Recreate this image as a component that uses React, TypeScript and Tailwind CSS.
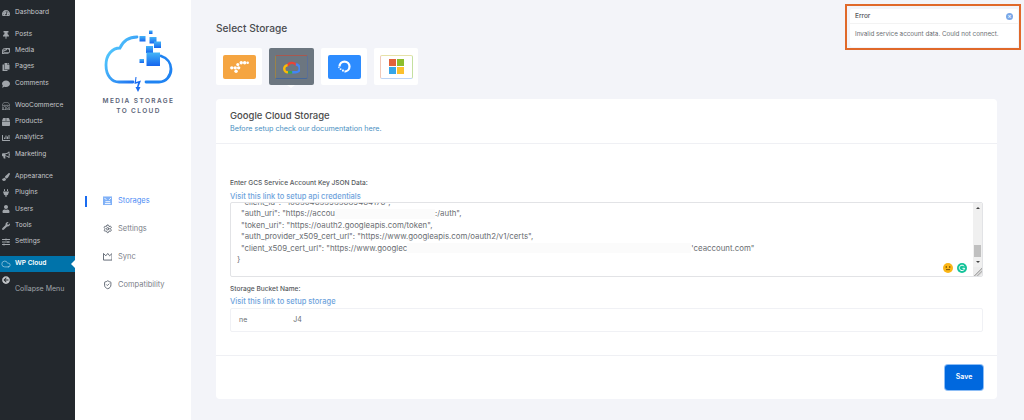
import {
  FaBox,
  FaBullhorn,
  FaChartBar,
  FaComment,
  FaCopy,
  FaImages,
  FaPaintBrush,
  FaPlug,
  FaSlidersH,
  FaTachometerAlt,
  FaThumbtack,
  FaUser,
  FaWrench,
  FaArrowCircleLeft,
} from "react-icons/fa";
import { BsShop } from "react-icons/bs";
import { Cloud, Settings, ShieldCheck } from "lucide-react";

const wpGroups = [
  [{ label: "Dashboard", icon: FaTachometerAlt }],
  [
    { label: "Posts", icon: FaThumbtack },
    { label: "Media", icon: FaImages },
    { label: "Pages", icon: FaCopy },
    { label: "Comments", icon: FaComment },
  ],
  [
    { label: "WooCommerce", icon: BsShop },
    { label: "Products", icon: FaBox },
    { label: "Analytics", icon: FaChartBar },
    { label: "Marketing", icon: FaBullhorn },
  ],
  [
    { label: "Appearance", icon: FaPaintBrush },
    { label: "Plugins", icon: FaPlug },
    { label: "Users", icon: FaUser },
    { label: "Tools", icon: FaWrench },
    { label: "Settings", icon: FaSlidersH },
  ],
];

function WpSidebar() {
  return (
    <aside className="flex w-[75px] shrink-0 flex-col bg-[#23282d] pt-[4.5px] text-[6.6px] text-[#c3c6ca]">
      {wpGroups.map((group, i) => (
        <div key={i} className="mb-[5.5px]">
          {group.map((item) => (
            <div key={item.label} className="flex h-[16.4px] items-center gap-[5px] pl-[2px]">
              <item.icon className="h-[8px] w-[8px] shrink-0 text-[#a0a5aa]" />
              <span>{item.label}</span>
            </div>
          ))}
        </div>
      ))}
      <div className="relative flex h-[16.5px] items-center gap-[4px] bg-[#0073aa] pl-[1px] font-semibold text-white">
        <Cloud className="h-[10px] w-[10px] shrink-0 text-[#b9dcec]" strokeWidth={1.5} />
        <span>WP Cloud</span>
        <span className="absolute right-0 top-[4px] border-y-[4px] border-r-[4px] border-y-transparent border-r-white" />
      </div>
      <div className="flex pl-[2px] pt-[3.5px]">
        <FaArrowCircleLeft className="h-[8px] w-[8px] shrink-0 text-[#c4c7ca]" />
      </div>
      <div className="pl-[15px] text-[7px] text-[#a0a5aa]">Collapse Menu</div>
    </aside>
  );
}

function Logo() {
  return (
    <svg viewBox="100 22 80 70" className="h-[70px] w-[80px]">
      <defs>
        <linearGradient id="cloud" x1="0" y1="0" x2="1" y2="1">
          <stop offset="0" stopColor="#5fdcff" />
          <stop offset="1" stopColor="#1a6cf0" />
        </linearGradient>
        <linearGradient id="bits" x1="0" y1="0" x2="0" y2="1">
          <stop offset="0" stopColor="#45b5f7" />
          <stop offset="1" stopColor="#1565ee" />
        </linearGradient>
      </defs>
      <path
        d="M138 34C129 34 124 38 121 45C113 45 107 52 107 62C107 73 113 79 120 79H134"
        fill="none"
        stroke="url(#cloud)"
        strokeWidth="2.8"
        strokeLinecap="round"
      />
      <path
        d="M147 79H160C167 79 172 73 172 66C172 60 168 55 162 53"
        fill="none"
        stroke="#1f83f2"
        strokeWidth="2.8"
        strokeLinecap="round"
      />
      <path d="M138 70L135.500 74H137.500L137 79L142 77.500L139.500 84H141.500L139 89L136.500 84H138L139 80L135.500 81L136.500 74H135.500Z" fill="#1a6cf0" />
      <g fill="url(#bits)">
        <rect x="150" y="27.500" width="3.500" height="3.500" />
        <rect x="140.500" y="33" width="6" height="5.500" />
        <rect x="150.500" y="34" width="7" height="6.500" />
        <rect x="155" y="38.500" width="7" height="6.500" />
        <rect x="147" y="43" width="7" height="7" />
        <rect x="147.500" y="49.500" width="13.500" height="13.500" />
        <rect x="140.500" y="56" width="4.500" height="4" />
      </g>
    </svg>
  );
}

function StoragesIcon({ className }: { className?: string }) {
  return (
    <svg viewBox="0 0 10 9" className={className}>
      <rect x="0" y="0" width="10" height="9" fill="#7fb0f7" />
      <path d="M1.500 1.500L3.500 3.500M8.500 1.500L6.500 3.500M2 7.500H8M2.500 5.500H7.500" stroke="#fff" strokeWidth="1" fill="none" />
    </svg>
  );
}

function SyncIcon({ className }: { className?: string }) {
  return (
    <svg viewBox="0 0 10 9" className={className} fill="none" stroke="#5f6672" strokeWidth="1">
      <path d="M.5 1V8H9.500V1L7 3.500L5 1L3 3.500Z" />
    </svg>
  );
}

const pluginNav = [
  { label: "Storages", icon: StoragesIcon, active: true },
  { label: "Settings", icon: Settings },
  { label: "Sync", icon: SyncIcon },
  { label: "Compatibility", icon: ShieldCheck },
];

function PluginSidebar() {
  return (
    <aside className="flex w-[116px] shrink-0 flex-col bg-white pt-[25px]">
      <div className="flex justify-center pl-[11px]">
        <Logo />
      </div>
      <div className="mt-[1px] pl-[11px] text-center text-[6.5px] font-semibold leading-[10px] tracking-[1.4px] text-[#5b6478]">
        <div>MEDIA STORAGE</div>
        <div>TO CLOUD</div>
      </div>
      <nav className="mt-[71px] flex flex-col">
        {pluginNav.map((item) => (
          <div key={item.label} className="flex h-[28px] items-center pl-[10px] text-[7.5px]">
            <span className={`mr-[16px] h-[11px] w-[1.5px] ${item.active ? "bg-[#1a6cf0]" : "bg-transparent"}`} />
            <item.icon
              className={`mr-[6px] h-[9.500px] w-[9.500px] ${item.active ? "text-[#3b82f6]" : "text-[#5f6672]"}`}
              strokeWidth={2.4}
            />
            <span className={item.active ? "text-[#4b8bf5]" : "text-[#7b8088]"}>{item.label}</span>
          </div>
        ))}
      </nav>
    </aside>
  );
}

function StorageTiles() {
  return (
    <div className="mt-[10px] flex gap-[7px]">
      <div className="flex h-[37px] w-[46px] items-center justify-center rounded-[2px] bg-white">
        <div className="flex h-[24px] w-[33px] items-center justify-center rounded-[2px] bg-[#f5a541]">
          <svg viewBox="0 0 22 14" className="h-[12px] w-[19px]" fill="#fff">
            <circle cx="2" cy="8" r="2" />
            <circle cx="6" cy="8" r="2" />
            <circle cx="10" cy="8" r="2" />
            <circle cx="7" cy="12" r="2" />
            <circle cx="9" cy="4" r="1.800" />
            <circle cx="13" cy="2" r="2" />
            <circle cx="17" cy="2" r="2" />
            <circle cx="20.500" cy="2" r="1.500" />
          </svg>
        </div>
      </div>
      <div className="relative flex h-[37px] w-[45px] items-center justify-center rounded-[2px] bg-[#6c7680]">
        <div className="flex h-[24px] w-[33px] items-center justify-center rounded-[2px] border border-t-[#a8584f] border-r-[#5b6f97] border-b-[#44679b] border-l-[#9b8348]">
          <svg viewBox="0 0 24 19" className="h-[14px] w-[17px]" fill="none" strokeWidth="3.400">
            <path d="M6 8A7.500 7.500 0 0 1 19 7" stroke="#ea4335" />
            <path d="M18 6A5.500 5.500 0 0 1 18 17H12" stroke="#4285f4" />
            <path d="M13 17H6" stroke="#34a853" />
            <path d="M7 17A5 5 0 0 1 6.500 7" stroke="#fbbc05" />
          </svg>
        </div>
        <span className="absolute left-[18px] top-[37px] border-x-[4px] border-t-[3px] border-x-transparent border-t-white" />
      </div>
      <div className="flex h-[37px] w-[46px] items-center justify-center rounded-[2px] bg-white">
        <div className="flex h-[24px] w-[33px] items-center justify-center rounded-[2px] bg-[#2d8cff]">
          <svg viewBox="0 0 24 24" className="h-[15px] w-[15px]" fill="none">
            <path d="M12 20A8 8 0 1 0 4 12" stroke="#fff" strokeWidth="3.600" />
            <rect x="8" y="17" width="3" height="3" fill="#fff" />
            <rect x="4.500" y="15" width="2.500" height="2.500" fill="#fff" />
            <rect x="2" y="12.500" width="2" height="2" fill="#fff" />
          </svg>
        </div>
      </div>
      <div className="flex h-[37px] w-[44px] items-center justify-center rounded-[2px] bg-white">
        <div className="flex h-[24px] w-[33px] items-center justify-center rounded-[2px] border border-t-[#e6e2a8] border-r-[#c4e0a0] border-b-[#bcd4f5] border-l-[#f0c8b8]">
          <div className="grid grid-cols-2 gap-[1px]">
            <span className="h-[7px] w-[7px] bg-[#e2623b]" />
            <span className="h-[7px] w-[7px] bg-[#8dbd2c]" />
            <span className="h-[7px] w-[7px] bg-[#36a6e8]" />
            <span className="h-[7px] w-[7px] bg-[#fbc02d]" />
          </div>
        </div>
      </div>
    </div>
  );
}

function Redacted({ w }: { w: number }) {
  return <span className="inline-block h-[10px] bg-[#fbfbfb] align-middle" style={{ width: w }} />;
}

function KeyField() {
  return (
    <div className="relative h-[75px] overflow-hidden rounded-[2px] border border-[#e2e3e6] bg-white text-[7.85px] leading-[11.5px] text-[#6a6d72]">
      <div className="-mt-[6.5px] pl-[6px]">
        <div className="pl-[4px]">"client_id": "108504655935689464176",</div>
        <div className="pl-[4px]">
          "auth_uri": "https://accou
          <Redacted w={100} />
          :/auth",
        </div>
        <div className="pl-[4px]">"token_uri": "https://oauth2.googleapis.com/token",</div>
        <div className="pl-[4px]">
          "auth_provider_x509_cert_url": "https://www.googleapis.com/oauth2/v1/certs",
        </div>
        <div className="flex items-center pl-[4px]">
          <span>"client_x509_cert_url": "https://www.googlec</span>
          <Redacted w={284} />
          <span>'ceaccount.com"</span>
        </div>
        <div>{"}"}</div>
      </div>
      <div className="absolute inset-y-0 right-0 flex w-[9px] flex-col items-center bg-[#f0f0f0]">
        <span className="mt-[4px] border-x-[2px] border-b-[2px] border-x-transparent border-b-[#444]" />
        <span className="mt-[36px] h-[12px] w-[7px] bg-[#c0c0c0]" />
        <span className="mt-[4px] border-x-[2px] border-t-[2px] border-x-transparent border-t-[#444]" />
        <span className="mt-auto h-[9px] w-[9px] bg-[linear-gradient(135deg,#ececec_55%,#a9a9a9_55%,#ececec_70%,#a9a9a9_70%,#ececec_85%)]" />
      </div>
      <div className="absolute bottom-[3.5px] right-[15px] flex gap-[4px]">
        <svg viewBox="0 0 10 10" className="h-[10px] w-[10px]">
          <circle cx="5" cy="5" r="5" fill="#fbb616" />
          <circle cx="3.300" cy="4" r="0.800" fill="#5a3b00" />
          <circle cx="6.700" cy="4" r="0.800" fill="#5a3b00" />
          <rect x="3" y="6.300" width="4" height="0.800" fill="#5a3b00" />
        </svg>
        <svg viewBox="0 0 10 10" className="h-[10px] w-[10px]">
          <circle cx="5" cy="5" r="5" fill="#15c39a" />
          <path d="M7.200 3.300A2.700 2.700 0 1 0 7.700 5.300H5.500" fill="none" stroke="#fff" strokeWidth="1" />
        </svg>
      </div>
    </div>
  );
}

function StorageCard() {
  return (
    <section className="mt-[14px] w-[781px] rounded-[4px] bg-white">
      <header className="h-[45px] border-b border-[#eff0f4] px-[14px] pt-[10px]">
        <h2 className="text-[9.5px] font-medium leading-[13px] text-[#4b4b4b]">Google Cloud Storage</h2>
        <p className="mt-[1px] text-[7.2px] leading-[11px] text-[#4a90c2]">
          Before setup check our documentation here.
        </p>
      </header>
      <div className="border-b border-[#eff0f4] px-[14px] pt-[34px]">
        <label className="block text-[6.6px] font-medium leading-[10px] text-[#55585d]">
          Enter GCS Service Account Key JSON Data:
        </label>
        <a className="mt-[4px] block h-[10px] text-[7.5px] font-medium leading-[9px] text-[#6ea3dc]">
          Visit this link to setup api credentials
        </a>
        <KeyField />
        <label className="mt-[7px] block text-[6.6px] font-medium leading-[10px] text-[#55585d]">
          Storage Bucket Name:
        </label>
        <a className="mt-[3px] block text-[7.5px] font-medium leading-[10px] text-[#6ea3dc]">
          Visit this link to setup storage
        </a>
        <div className="mb-[23px] mt-[1px] flex h-[24px] items-center rounded-[2px] border border-[#f0f1f5] pl-[8px] text-[7px] text-[#6a6d72]">
          ne
          <span className="w-[46px]" />
          J4
        </div>
      </div>
      <footer className="flex justify-end px-[14px] pb-[9px] pt-[9px]">
        <button className="h-[25px] w-[38px] rounded-[3px] bg-[#0068de] text-[7px] font-semibold text-white ring-1 ring-[#8dbdf5]">
          Save
        </button>
      </footer>
    </section>
  );
}

export default function App() {
  return (
    <div className="relative flex h-[420px] w-[1024px] overflow-hidden bg-[#f3f4f9] font-['Inter','Noto_Sans',sans-serif]">
      <WpSidebar />
      <PluginSidebar />
      <main className="flex-1 pl-[25px] pt-[20px]">
        <h1 className="text-[10.2px] font-medium leading-[17px] text-[#4a4c50]">Select Storage</h1>
        <div className="pt-[1px]">
          <StorageTiles />
        </div>
        <StorageCard />
      </main>
      <div className="absolute right-[3px] top-[4px] h-[46px] w-[176px] border-2 border-[#e0692a] bg-[#f3f4f9] pb-[1px] pl-[3px] pr-[1px] pt-[3px]">
        <div className="h-full rounded-[2px] bg-white">
          <div className="relative h-[15px] border-b border-[#f3f3f3] pl-[5px] pt-[3px] text-[6.5px] font-medium leading-[9px] text-[#55585d]">
            Error
            <span className="absolute right-[5px] top-[3.5px] flex h-[7px] w-[7px] items-center justify-center rounded-full bg-[#7aa7e8] text-[6px] leading-none text-white">
              ×
            </span>
          </div>
          <p className="pl-[5px] pt-[6px] text-[6.3px] leading-[9px] text-[#6a6d72]">
            Invalid service account data. Could not connect.
          </p>
        </div>
      </div>
    </div>
  );
}
